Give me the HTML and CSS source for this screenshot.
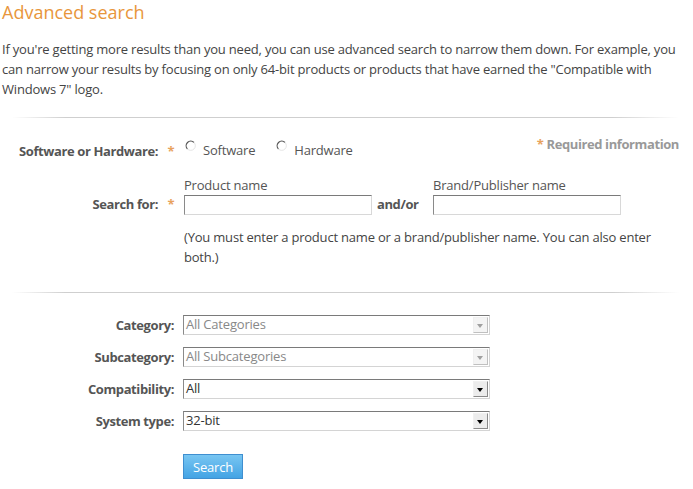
FILE: index.html
```html
<!DOCTYPE html>
<html>
<head>
<meta charset="utf-8">
<link rel="stylesheet" href="styles.css">
</head>
<body>
<h1 class="title">Advanced search</h1>
<p class="intro">If you're getting more results than you need, you can use advanced search to narrow them down. For example, you can narrow your results by focusing on only 64-bit products or products that have earned the "Compatible with Windows 7" logo.</p>
<div class="sep"></div>

<div class="section1">
  <div class="row-type">
    <div class="lbl">Software or Hardware:</div>
    <div class="star">*</div>
    <div class="radios">
      <label class="radio"><svg width="12" height="12" viewBox="0 0 12 12"><path d="M2.5 9 A4.5 4.5 0 0 1 9 2.5" fill="none" stroke="#555" stroke-width="1.2"/><path d="M9 2.5 A4.5 4.5 0 0 1 2.5 9" fill="none" stroke="#e6e6e6" stroke-width="1"/></svg>Software</label>
      <label class="radio"><svg width="12" height="12" viewBox="0 0 12 12"><path d="M2.5 9 A4.5 4.5 0 0 1 9 2.5" fill="none" stroke="#555" stroke-width="1.2"/><path d="M9 2.5 A4.5 4.5 0 0 1 2.5 9" fill="none" stroke="#e6e6e6" stroke-width="1"/></svg>Hardware</label>
    </div>
    <div class="required"><span class="star-inline">*</span> Required information</div>
  </div>

  <div class="row-search">
    <div class="lbl">Search for:</div>
    <div class="star">*</div>
    <div class="field">
      <div class="caption">Product name</div>
      <div class="input"></div>
    </div>
    <div class="andor">and/or</div>
    <div class="field">
      <div class="caption">Brand/Publisher name</div>
      <div class="input"></div>
    </div>
  </div>
  <p class="note">(You must enter a product name or a brand/publisher name. You can also enter both.)</p>
</div>

<div class="sep sep2"></div>

<div class="section2">
  <div class="srow">
    <div class="slbl">Category:</div>
    <div class="select disabled"><span class="val">All Categories</span><span class="arrow"></span></div>
  </div>
  <div class="srow">
    <div class="slbl">Subcategory:</div>
    <div class="select disabled"><span class="val">All Subcategories</span><span class="arrow"></span></div>
  </div>
  <div class="srow">
    <div class="slbl">Compatibility:</div>
    <div class="select"><span class="val">All</span><span class="arrow"></span></div>
  </div>
  <div class="srow">
    <div class="slbl">System type:</div>
    <div class="select"><span class="val">32-bit</span><span class="arrow"></span></div>
  </div>
  <div class="btnrow">
    <button class="btn">Search</button>
  </div>
</div>
</body>
</html>
```
FILE: styles.css
```css
body {
  margin: 0;
  padding: 0 2px;
  font-family: "Open Sans", "Noto Sans", sans-serif;
  font-size: 13px;
  letter-spacing: -0.2px;
  color: #444;
  background: #fff;
}
.title {
  margin: 0;
  font-size: 18px;
  font-weight: 400;
  letter-spacing: 0;
  color: #e8963c;
  line-height: 24px;
}
.intro {
  margin: 15px 0 0 0;
  line-height: 20px;
}
.sep {
  height: 1px;
  margin: 18px 12px 0 10px;
  background: linear-gradient(to right, #fff, #cfcfcf 8%, #cfcfcf 90%, #fff);
}
.section1 {
  padding-top: 17px;
}
.row-type {
  display: flex;
  align-items: flex-start;
}
.lbl {
  width: 156px;
  text-align: right;
  font-weight: 700;
  color: #555;
  letter-spacing: -0.4px;
}
.row-type .lbl { padding-top: 7px; }
.star {
  width: 26px;
  text-align: center;
  color: #e8a25e;
  font-weight: 700;
}
.row-type .star { padding-top: 7px; }
.radios {
  display: flex;
  gap: 20px;
  padding-top: 6px;
  flex: 1;
}
.radio {
  display: flex;
  align-items: flex-start;
  gap: 6px;
  color: #555;
}
.radio svg { margin-top: -1px; margin-left: 1px; }
.required {
  font-weight: 700;
  color: #999;
  letter-spacing: -0.4px;
  padding-right: 12px;
}
.star-inline { color: #e8a25e; }

.row-search {
  display: flex;
  align-items: flex-end;
  margin-top: 16px;
}
.row-search .lbl, .row-search .star {
  padding-bottom: 2px;
}
.caption {
  color: #555;
  line-height: 18px;
  margin-bottom: 1px;
}
.input {
  width: 186px;
  height: 18px;
  border: 1px solid #d8d8d8;
  border-top-color: #7a7a7a;
  border-left-color: #8a8a8a;
  background: #fff;
}
.andor {
  font-weight: 700;
  color: #555;
  width: 61px;
  padding-left: 5px;
  box-sizing: border-box;
  padding-bottom: 2px;
  letter-spacing: -0.4px;
}
.note {
  margin: 12px 30px 0 182px;
  line-height: 20px;
}
.sep2 {
  margin-top: 25px;
}
.section2 {
  padding-top: 22px;
}
.srow {
  display: flex;
  align-items: center;
  height: 20px;
  margin-bottom: 12px;
}
.slbl {
  width: 172px;
  text-align: right;
  font-weight: 700;
  color: #555;
  padding-right: 9px;
  letter-spacing: -0.4px;
}
.select {
  width: 305px;
  height: 18px;
  border: 1px solid #d4d4d4;
  border-top-color: #7a7a7a;
  border-left-color: #8a8a8a;
  display: flex;
  align-items: stretch;
  justify-content: space-between;
}
.val {
  padding-left: 2px;
  line-height: 17px;
  color: #333;
}
.disabled .val { color: #888; }
.arrow {
  width: 15px;
  margin: 1px;
  box-sizing: border-box;
  border: 1px solid #8a8a8a;
  border-top-color: #f0f0f0;
  border-left-color: #f0f0f0;
  background: #ececec;
  position: relative;
}
.arrow::after {
  content: "";
  position: absolute;
  left: 3px;
  top: 6px;
  border-left: 3.5px solid transparent;
  border-right: 3.5px solid transparent;
  border-top: 4px solid #000;
}
.disabled .arrow { border-right-color: #c0c0c0; border-bottom-color: #c0c0c0; background: #f4f4f4; }
.disabled .arrow::after { border-top-color: #a0a0a0; }
.btnrow {
  padding-left: 181px;
  padding-top: 11px;
}
.btn {
  width: 60px;
  height: 25px;
  border: 1px solid #3f8fd0;
  background: linear-gradient(#78c6f2, #44a3e4);
  color: #fff;
  font-family: inherit;
  font-size: 13px;
  letter-spacing: -0.2px;
  padding: 0;
  margin: 0;
}
```
